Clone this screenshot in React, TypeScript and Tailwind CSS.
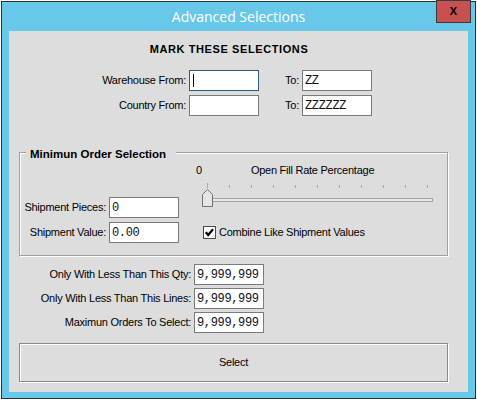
import clsx from "clsx";

interface TextBoxProps {
  value?: string;
  focused?: boolean;
  className?: string;
}

// Win32 style edit box: white field, 1px border, fixed-width digits
function TextBox({ value = "", focused = false, className }: TextBoxProps) {
  return (
    <div
      className={clsx(
        "flex h-[21px] w-[70px] shrink-0 items-center border bg-white pl-[2px] font-['Liberation_Mono',monospace] text-[12px] leading-none tracking-[-0.35px] text-[#101018]",
        focused ? "border-[#2a5c8a]" : "border-[#7a7a7a]",
        className
      )}
    >
      {focused && <span className="ml-[1px] h-[13px] w-px bg-black" />}
      {value}
    </div>
  );
}

function FillRateSlider() {
  const ticks = Array.from({ length: 11 }, (_, i) => 5.5 + i * 22);
  return (
    <svg width="232" height="26" viewBox="0 0 232 26" className="ml-[6px] mt-[6px] block">
      {ticks.map((x, i) => (
        <line key={x} x1={x} x2={x} y1={i === 0 ? 0 : 2} y2={5} stroke="#a8a8a8" />
      ))}
      <rect x="10.5" y="15.5" width="220" height="3" fill="#e7e7e7" stroke="#a5a5a5" />
      <polygon
        points="5.5,6.5 10.5,11.5 10.5,23.5 0.5,23.5 0.5,11.5"
        fill="#e6e6e6"
        stroke="#707070"
      />
    </svg>
  );
}

function CheckBox() {
  return (
    <svg width="13" height="13" viewBox="0 0 13 13" className="block shrink-0">
      <rect x="0.5" y="0.5" width="12" height="12" fill="#fff" stroke="#4a4a4a" />
      <polyline points="2.8,6.2 5.2,9 10,3.2" fill="none" stroke="#000" strokeWidth="2.2" />
    </svg>
  );
}

export default function App() {
  return (
    <div className="h-[401px] w-[477px] bg-white pl-[1px] pt-[1px] font-['Liberation_Sans',Arial,sans-serif] text-[11px] tracking-[-0.25px] text-black">
      {/* window frame */}
      <div className="relative flex h-[398px] w-[475px] flex-col border border-[#2d2d2d] bg-[#67c8e9] px-[7px]">
        <div className="flex h-[29px] items-center justify-center font-['Open_Sans',sans-serif] text-[14px] tracking-normal text-white">
          Advanced Selections
        </div>
        <button className="absolute right-[4px] top-[-2px] flex h-[23px] w-[35px] items-center justify-center border border-[#3a3a3a] bg-[#c75050] text-[11px] font-black tracking-normal text-black">
          X
        </button>

        {/* client area */}
        <div className="flex h-[361px] flex-col bg-[#dddddd]">
          <h1 className="pr-[19px] pt-[11px] text-center text-[11px] font-bold leading-[14px] tracking-[0.6px]">
            MARK THESE SELECTIONS
          </h1>

          <div className="mt-[14px] flex h-[21px] items-center">
            <span className="w-[177px] text-right">Warehouse From:</span>
            <TextBox className="ml-[3px]" focused />
            <span className="w-[40px] text-right">To:</span>
            <TextBox className="ml-[3px]" value="ZZ" />
          </div>
          <div className="mt-[4px] flex h-[21px] items-center">
            <span className="w-[177px] text-right">Country From:</span>
            <TextBox className="ml-[3px]" />
            <span className="w-[40px] text-right">To:</span>
            <TextBox className="ml-[3px]" value="ZZZZZZ" />
          </div>

          {/* group box */}
          <div className="ml-[10px] mt-[36px] w-[429px] border border-[#a0a0a0] pb-[12px] shadow-[inset_1px_1px_0_#fff,1px_1px_0_#fff]">
            <div className="-mt-[6px] ml-[6px] w-fit bg-[#dddddd] pl-[4px] pr-[10px] text-[11.5px] font-bold leading-[14px] tracking-normal">
              Minimun Order Selection
            </div>
            <div className="flex items-start">
              <div className="mt-[36px] flex flex-col gap-[4px]">
                <div className="flex h-[21px] items-center">
                  <span className="w-[86px] text-right">Shipment Pieces:</span>
                  <TextBox className="ml-[3px]" value="0" />
                </div>
                <div className="flex h-[21px] items-center">
                  <span className="w-[86px] text-right">Shipment Value:</span>
                  <TextBox className="ml-[3px]" value="0.00" />
                </div>
              </div>
              <div className="ml-[17px] flex flex-col">
                <div className="mt-[2px] flex h-[14px] leading-[14px]">
                  <span>0</span>
                  <span className="ml-[49px]">Open Fill Rate Percentage</span>
                </div>
                <FillRateSlider />
                <div className="ml-[7px] mt-[16px] flex h-[14px] items-center gap-[3px]">
                  <CheckBox />
                  <span>Combine Like Shipment Values</span>
                </div>
              </div>
            </div>
          </div>

          <div className="mt-[8px] flex flex-col gap-[3px]">
            <div className="flex h-[21px] items-center">
              <span className="w-[182px] text-right">Only With Less Than This Qty:</span>
              <TextBox className="ml-[3px]" value="9,999,999" />
            </div>
            <div className="flex h-[21px] items-center">
              <span className="w-[182px] text-right">Only With Less Than This Lines:</span>
              <TextBox className="ml-[3px]" value="9,999,999" />
            </div>
            <div className="flex h-[21px] items-center">
              <span className="w-[182px] text-right">Maximun Orders To Select:</span>
              <TextBox className="ml-[3px]" value="9,999,999" />
            </div>
          </div>

          <button className="ml-[10px] mt-[10px] flex h-[39px] w-[429px] items-center justify-center border border-[#8a8a8a] shadow-[inset_1px_1px_0_#fff,1px_1px_0_#fff]">
            Select
          </button>
        </div>
      </div>
    </div>
  );
}
